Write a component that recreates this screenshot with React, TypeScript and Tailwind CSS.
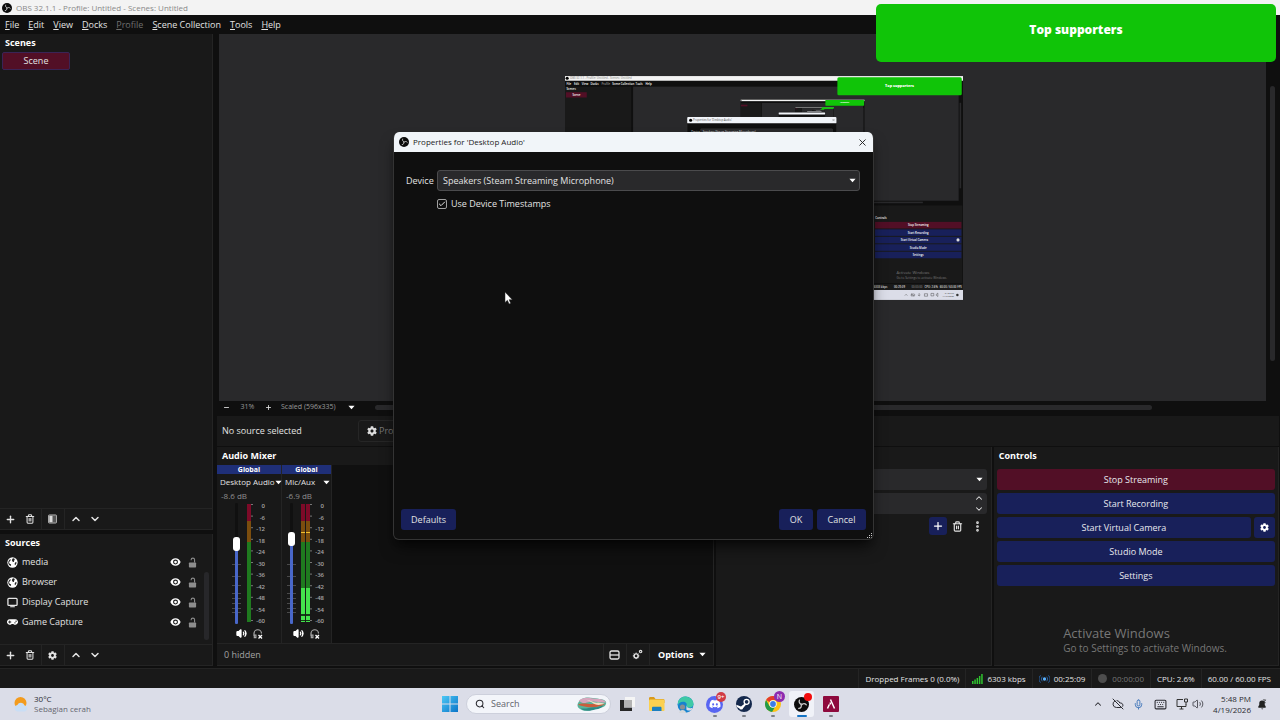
import React from 'react';
import { Plus, Minus, Trash2, ChevronUp, ChevronDown, X, Search, Mic, Keyboard, EllipsisVertical, CloudOff, Volume2, Check } from 'lucide-react';
import { FaGamepad, FaDiscord, FaCog } from 'react-icons/fa';

interface Source {
  name: string;
  kind: 'browser' | 'display' | 'game';
}

interface Channel {
  name: string;
  db: string;
  level: number;
  stereo: boolean;
  width: string;
}

const menus = ['File', 'Edit', 'View', 'Docks', 'Profile', 'Scene Collection', 'Tools', 'Help'];

const sources: Source[] = [
  { name: 'media', kind: 'browser' },
  { name: 'Browser', kind: 'browser' },
  { name: 'Display Capture', kind: 'display' },
  { name: 'Game Capture', kind: 'game' },
];

const channels: Channel[] = [
  { name: 'Desktop Audio', db: '-8.6 dB', level: 68, stereo: false, width: 'w-[65px]' },
  { name: 'Mic/Aux', db: '-6.9 dB', level: 73, stereo: true, width: 'w-[50px]' },
];

const scale = [0, -6, -12, -18, -24, -30, -36, -42, -48, -54, -60];

const Caret = ({ className = '' }: { className?: string }) => (
  <svg viewBox="0 0 8 5" className={`w-[7px] h-[5px] shrink-0 ${className}`} aria-hidden="true">
    <path d="M0.5 0.5h7L4 4.5z" fill="#fff" />
  </svg>
);

const ObsLogo = ({ className = '' }: { className?: string }) => (
  <svg viewBox="0 0 20 20" className={`shrink-0 ${className}`} aria-hidden="true">
    <circle cx="10" cy="10" r="10" fill="#0c0c0c" />
    <g fill="none" stroke="#c9c9c9" strokeWidth="1.7" strokeLinecap="round">
      <path d="M10.500 9.500C7.500 9.300 6.200 6.800 7.200 4.200" />
      <path d="M10.500 9.500C7.500 9.300 6.200 6.800 7.200 4.200" transform="rotate(120 10 10)" />
      <path d="M10.500 9.500C7.500 9.300 6.200 6.800 7.200 4.200" transform="rotate(240 10 10)" />
    </g>
  </svg>
);

const GlobeIcon = () => (
  <svg viewBox="0 0 12 12" className="w-[11px] h-[11px]">
    <circle cx="6" cy="6" r="5.6" fill="#fff" />
    <path d="M6.4 1.4 8 1.7l.5 1.6-1 .9.3 1-1.2.3-.8-.9-.5-1.3zM3.6 2.4l.7 1-1.2 1-.9 2 1 1.2 1.2.4v1.8C2.500 9.300 1.400 7.900 1.400 6c0-1.500.9-2.900 2.200-3.600zM9.400 5.400l1 .2c0 1.500-.7 2.700-1.700 3.500l-.4-1.700z" fill="#222" />
  </svg>
);

const SourceIcon = ({ kind }: { kind: Source['kind'] }) => {
  if (kind === 'browser') return <GlobeIcon />;
  if (kind === 'game') return <FaGamepad className="w-[11px] h-[10px] text-white" />;
  return (
    <svg viewBox="0 0 12 12" className="w-[11px] h-[11px]" fill="none" stroke="#e6e6e6">
      <rect x="1" y="1.500" width="10" height="7.600" rx="1" strokeWidth="1.400" />
      <path d="M3.500 10.600h5" strokeWidth="1.200" />
    </svg>
  );
};

const EyeIcon = () => (
  <svg viewBox="0 0 12 10" className="w-[11px] h-[10px]">
    <path d="M6 .8c2.600 0 4.700 1.700 5.600 4.200C10.700 7.500 8.600 9.200 6 9.200S1.300 7.500.4 5C1.300 2.500 3.400.8 6 .8z" fill="#fff" />
    <circle cx="6" cy="5" r="2.700" fill="#191919" />
    <circle cx="6" cy="5" r="1.500" fill="#fff" />
  </svg>
);

const UnlockIcon = () => (
  <svg viewBox="0 0 10 12" className="w-[9px] h-[11px]">
    <rect x="1" y="6" width="8" height="5.600" rx=".8" fill="#8c8c8c" />
    <path d="M7.300 6V3a1.900 1.900 0 0 0-3.800 0v.6" fill="none" stroke="#8c8c8c" strokeWidth="1.200" />
  </svg>
);

const GearsIcon = () => (
  <svg viewBox="0 0 12 12" className="w-[11px] h-[11px]" fill="none" stroke="#e2e2e2">
    <circle cx="4.500" cy="7.500" r="2.200" strokeWidth="1.600" />
    <path d="M4.500 3.900v7.200M.9 7.500h7.200M2 5l5 5M7 5l-5 5" strokeWidth="1" strokeDasharray="1.300 4.600" />
    <circle cx="9.400" cy="2.800" r="1.300" strokeWidth="1.300" />
  </svg>
);

const LayoutIcon = () => (
  <svg viewBox="0 0 11 10" className="w-[11px] h-[10px]" fill="none" stroke="#e2e2e2" strokeWidth="1.300">
    <rect x="1" y="1" width="9" height="8" rx="1.500" />
    <path d="M1 5h9" />
  </svg>
);

const ToolButton = ({ label, children }: { label: string; children: React.ReactNode }) => (
  <button aria-label={label} className="w-[19px] h-[17px] flex items-center justify-center text-[#e2e2e2] rounded-sm">
    {children}
  </button>
);

const Divider = () => <span className="w-px h-full bg-[#242424] ml-[2px] mr-px" />;

const DockTitle = ({ children }: { children: React.ReactNode }) => (
  <h2 className="h-[18px] pl-[5px] flex items-center font-bold text-white shrink-0">{children}</h2>
);

const DockToolbar = ({ filters = false }: { filters?: boolean }) => (
  <div className="h-[21px] px-[1px] flex items-center border-t border-[#242424] shrink-0">
    <ToolButton label="Add"><Plus size={11} strokeWidth={3} /></ToolButton>
    <ToolButton label="Remove"><Trash2 size={10} strokeWidth={2.5} /></ToolButton>
    <Divider />
    <ToolButton label={filters ? 'Filters' : 'Source properties'}>
      {filters ? (
        <svg viewBox="0 0 10 10" className="w-[9px] h-[10px]">
          <rect x=".5" y=".5" width="9" height="9" rx="1" fill="#555" stroke="#bbb" />
          <rect x="1.500" y="1.500" width="3.500" height="7" fill="#ddd" />
        </svg>
      ) : (
        <FaCog size={9} />
      )}
    </ToolButton>
    <Divider />
    <ToolButton label="Move up"><ChevronUp size={12} strokeWidth={3} /></ToolButton>
    <ToolButton label="Move down"><ChevronDown size={12} strokeWidth={3} /></ToolButton>
  </div>
);

// The captured desktop shows this same window again, so the drawing nests itself.
const CapturedDesktop = ({ depth }: { depth: number }) => (
  <>
    <rect width="1280" height="720" fill="#0f0f0f" />
    <rect width="1280" height="15" fill="#f3f3f3" />
    <circle cx="7" cy="7" r="5" fill="#000" />
    <rect y="34" width="213" height="632" fill="#191919" />
    <rect x="219" y="34" width="1047" height="367" fill="#29292b" />
    <rect x="1269" y="86" width="5" height="275" fill="#29292b" />
    <rect x="500" y="404" width="651" height="5" fill="#29292b" />
    <rect x="217" y="416" width="1061" height="250" fill="#191919" />
    <rect y="668" width="1280" height="20" fill="#191919" />
    <rect y="688" width="1280" height="32" fill="#dbdde8" />
    <rect x="3" y="52" width="67" height="17" fill="#520f26" />
    {depth === 1 && (
      <g fill="#fff" fontSize="9" fontWeight="600">
        <text x="16" y="11" fill="#999">OBS 32.1.1 - Profile: Untitled - Scenes: Untitled</text>
        <text x="5" y="28">File</text>
        <text x="29" y="28">Edit</text>
        <text x="54" y="28">View</text>
        <text x="82" y="28">Docks</text>
        <text x="117" y="28" fill="#999">Profile</text>
        <text x="152" y="28">Scene Collection</text>
        <text x="227" y="28">Tools</text>
        <text x="259" y="28">Help</text>
        <text x="5" y="45">Scenes</text>
        <text x="24" y="64">Scene</text>
        <text x="998" y="459">Controls</text>
      </g>
    )}
    {['Stop Streaming', 'Start Recording', 'Start Virtual Camera', 'Studio Mode', 'Settings'].map((label, i) => (
      <g key={label}>
        <rect x="997" y={469 + i * 24} width="278" height="21" fill={i === 0 ? '#520f26' : '#18205a'} />
        {depth === 1 && (
          <text x={i === 2 ? 1124 : 1136} y={483 + i * 24} fontSize="9" fontWeight="600" fill="#fff" textAnchor="middle">{label}</text>
        )}
      </g>
    ))}
    {depth === 1 && (
      <g>
        <circle cx="1264" cy="527" r="5" fill="#ddd" />
        <text x="1066" y="638" fontSize="13" fill="#777">Activate Windows</text>
        <text x="1066" y="652" fontSize="10" fill="#777">Go to Settings to activate Windows.</text>
        <g fill="#ddd" fontSize="9" fontWeight="600">
          <text x="993" y="682">6303 kbps</text>
          <text x="1058" y="682">00:25:09</text>
          <text x="1114" y="682" fill="#777">00:00:00</text>
          <text x="1156" y="682">CPU: 2.6%</text>
          <text x="1205" y="682">60.00 / 60.00 FPS</text>
        </g>
        <g fill="none" stroke="#444" strokeWidth="1.500">
          <path d="M1093 706l4-4 4 4M1113 700l10 8M1113 707h9a3 3 0 0 0 0-6h-8zM1139 698v8M1135 704q4 6 8 0M1156 700h10v8h-10zM1177 699h9v8h-9zM1194 702l5-4v11l-5-4z" />
        </g>
        <text x="1251" y="702" fontSize="8" fill="#333" textAnchor="end">5:48 PM</text>
        <text x="1251" y="712" fontSize="8" fill="#333" textAnchor="end">4/19/2026</text>
        <circle cx="1262" cy="704" r="4" fill="#333" />
      </g>
    )}
    {depth < 4 && (
      <g transform="translate(565 76) scale(0.311)">
        <CapturedDesktop depth={depth + 1} />
      </g>
    )}
    <rect x="393" y="132" width="480" height="407" rx="4" fill="#0f0f0f" stroke="#333" />
    <rect x="393" y="132" width="480" height="20" rx="3" fill="#f1f4f9" />
    {depth === 1 && (
      <g>
        <circle cx="404" cy="142" r="5" fill="#000" />
        <text x="412" y="145" fontSize="9" fill="#555">Properties for 'Desktop Audio'</text>
        <path d="M860 138l7 7M867 138l-7 7" stroke="#333" />
        <text x="406" y="184" fontSize="9" fill="#ddd">Device</text>
        <rect x="437" y="170" width="423" height="21" fill="#29292b" stroke="#555" />
        <text x="443" y="184" fontSize="9" fill="#ddd">Speakers (Steam Streaming Microphone)</text>
      </g>
    )}
    <rect x="876" y="4" width="400" height="58" rx="5" fill="#10c408" />
    {depth < 3 && <text x="1076" y="34" fontSize="12" fontWeight="800" fill="#fff" textAnchor="middle">Top supporters</text>}
  </>
);

const Fader = ({ channel }: { channel: Channel }) => {
  const top = 7 + ((100 - channel.level) / 100) * 107;
  return (
    <div className="relative w-[9px] h-[121px]">
      <svg viewBox="0 0 9 121" className="w-[9px] h-[121px]" aria-hidden="true">
        <rect x="3" y="0" width="3" height="121" rx="1" fill="#101010" />
        {[61, 73, 82, 90, 95, 100, 105, 109].map(y => (
          <rect key={y} x="0" y={y} width="9" height="1" fill="#4a4a4a" />
        ))}
        <rect x="3" y={top} width="3" height={121 - top} rx="1" fill="#4967c9" />
      </svg>
      <input
        type="range"
        aria-label={`${channel.name} volume`}
        defaultValue={channel.level}
        className="absolute inset-0 w-[9px] h-[121px] m-0 appearance-none bg-transparent [writing-mode:vertical-lr] [direction:rtl] [&::-webkit-slider-thumb]:appearance-none [&::-webkit-slider-thumb]:w-[7px] [&::-webkit-slider-thumb]:h-[14px] [&::-webkit-slider-thumb]:rounded-[3px] [&::-webkit-slider-thumb]:bg-white"
      />
    </div>
  );
};

const Meter = ({ stereo }: { stereo: boolean }) => {
  const bars = stereo ? [0, 5] : [0];
  const end = stereo ? 9 : 4;
  return (
    <svg viewBox={`0 0 ${end + 15} 121`} className={stereo ? 'w-[24px] h-[121px]' : 'w-[19px] h-[121px]'}>
      {bars.map(x => (
        <g key={x}>
          <rect x={x} y="1" width="4" height="17" fill="#7d0a28" />
          <rect x={x} y="18" width="4" height="21" fill="#7b4d0e" />
          <rect x={x} y="39" width="4" height="80" fill="#1f7a1f" />
          {stereo && (
            <>
              <rect x={x} y="29" width="4" height="1" fill="#f0c030" />
              <rect x={x} y="85" width="4" height="34" fill="#44e24c" />
              <rect x={x} y="111" width="4" height="2" fill="#123d14" />
              <rect x={x} y="117" width="4" height="1" fill="#123d14" />
            </>
          )}
        </g>
      ))}
      {scale.map((db, i) => (
        <g key={db}>
          <rect x={end} y={1 + i * 11.6} width="2" height="1" fill="#777" />
          <text x={end + 14} y={5 + i * 11.5} fontSize="6" fontWeight="600" fill="#a5a5a5" textAnchor="end">{db}</text>
        </g>
      ))}
    </svg>
  );
};

const MixerStrip = ({ channel }: { channel: Channel }) => (
  <div className={`${channel.width} flex flex-col bg-[#181818] border-r border-[#242424]`}>
    <div className="h-[9px] bg-[#1f2f78] text-white text-[7px] font-bold leading-[9px] text-center">Global</div>
    <button className="mt-[2px] h-3 pl-[3px] pr-px flex items-center justify-between text-[8px] text-[#e2e2e2] whitespace-nowrap">
      {channel.name} <Caret />
    </button>
    <div className="h-[15px] pl-1 flex items-center text-[8px] text-[#8f8f8f]">{channel.db}</div>
    <div className={`h-[121px] flex ${channel.stereo ? 'pl-[5px] gap-[5px]' : 'pl-[15px] gap-[6px]'}`}>
      <Fader channel={channel} />
      <Meter stereo={channel.stereo} />
    </div>
    <div className="flex-1 flex items-center justify-center gap-[6px]">
      <button aria-label="Mute"><Volume2 size={11} strokeWidth={2.5} fill="#fff" color="#fff" /></button>
      <button aria-label="Monitor">
        <svg viewBox="0 0 10 10" className="w-[10px] h-[10px]" fill="none" stroke="#aaa">
          <path d="M1 7V4.500a3.700 3.700 0 0 1 7.500 0M1.300 6v2.700h1.600V6z" strokeWidth="1.200" />
          <path d="M5.500 6l3.500 3.500M9 6 5.500 9.500" stroke="#fff" strokeWidth="1.300" />
        </svg>
      </button>
    </div>
  </div>
);

const ControlButton = ({ label, red = false }: { label: string; red?: boolean }) => (
  <button className={`h-[21px] flex-1 rounded-[3px] text-[#e8e8ee] ${red ? 'bg-[#520f26]' : 'bg-[#18205a]'}`}>{label}</button>
);

const PropertiesDialog = () => (
  <div role="dialog" aria-label="Properties for 'Desktop Audio'" className="absolute left-[393px] top-[132px] w-[481px] h-[408px] flex flex-col bg-[#0f0f0f] border border-t-0 border-[#343434] rounded-md overflow-hidden shadow-lg shadow-black/60">
    <div className="h-5 px-[5px] flex items-center gap-1 bg-[#f1f5f9] text-[#1c1c1c] text-[8px]">
      <ObsLogo className="w-[10px] h-[10px]" />
      <span className="flex-1">Properties for 'Desktop Audio'</span>
      <button aria-label="Close"><X size={11} strokeWidth={2} /></button>
    </div>
    <div className="flex-1 pt-[18px] pl-3 pr-[13px]">
      <div className="flex items-center gap-1">
        <label htmlFor="device" className="w-[27px]">Device</label>
        <div className="relative flex-1">
          <select id="device" className="w-full h-[21px] pl-[5px] appearance-none rounded-[3px] border border-[#4b4b4d] bg-[#29292b] text-[#e2e2e2]">
            <option>Speakers (Steam Streaming Microphone)</option>
          </select>
          <Caret className="absolute right-1 top-2 pointer-events-none" />
        </div>
      </div>
      <label className="mt-[7px] ml-[31px] h-3 flex items-center gap-1">
        <span className="relative w-[10px] h-[10px] flex">
          <input type="checkbox" defaultChecked className="w-[10px] h-[10px] appearance-none rounded-[2px] border border-[#a0a0a0]" />
          <Check size={8} strokeWidth={3} className="absolute left-[1px] top-[1px] pointer-events-none" />
        </span>
        Use Device Timestamps
      </label>
    </div>
    <div className="pb-[9px] pl-[7px] pr-[7px] flex gap-1">
      <button className="w-[55px] h-[21px] mr-auto rounded-[3px] bg-[#18205a]">Defaults</button>
      <button className="w-[34px] h-[21px] rounded-[3px] bg-[#18205a]">OK</button>
      <button className="w-[49px] h-[21px] rounded-[3px] bg-[#18205a]">Cancel</button>
    </div>
    <svg viewBox="0 0 6 6" className="absolute right-px bottom-[1px] w-[6px] h-[6px]" fill="#ccc" aria-hidden="true">
      <path d="M5 1h1v1h-1zM3 3h1v1h-1zM5 3h1v1h-1zM1 5h1v1h-1zM3 5h1v1h-1zM5 5h1v1h-1z" />
    </svg>
  </div>
);

const TaskIcon = ({ label, running = false, active = false, children }: { label: string; running?: boolean; active?: boolean; children: React.ReactNode }) => (
  <button aria-label={label} className={`relative w-[25px] h-[26px] flex items-center justify-center rounded-[3px] ${active ? 'bg-[#f0f2f8]' : ''}`}>
    {children}
    {running && <span className={`absolute bottom-0 h-[2px] rounded-full ${active ? 'w-[10px] bg-[#1473c4]' : 'w-1 bg-[#7d8088]'}`} />}
  </button>
);

const Taskbar = () => (
  <footer className="h-8 grid grid-cols-[1fr_auto_1fr] items-center bg-[#dbdde8] text-[#2a2a30] text-[8px]">
    <div className="pl-[13px] flex items-center gap-[5px]">
      <svg viewBox="0 0 16 16" className="w-4 h-4">
        <circle cx="7.500" cy="7" r="6" fill="#f39b1d" />
        <path d="M4.500 15.500a3.300 3.300 0 0 1-.2-6.500 4 4 0 0 1 7.300.4 3.100 3.100 0 0 1 .4 6.100z" fill="#c9def5" />
      </svg>
      <div className="leading-[10px]">
        <div>30°C</div>
        <div className="text-[#65666e]">Sebagian cerah</div>
      </div>
    </div>
    <div className="flex items-center gap-1">
      <TaskIcon label="Start">
        <svg viewBox="0 0 16 16" className="w-4 h-4">
          <defs>
            <linearGradient id="win" x1="0" y1="0" x2="1" y2="1">
              <stop offset="0" stopColor="#4cc8f5" />
              <stop offset="1" stopColor="#0a74c8" />
            </linearGradient>
          </defs>
          <path d="M0 0h7.500v7.500H0zM8.500 0H16v7.500H8.500zM0 8.500h7.500V16H0zM8.500 8.500H16V16H8.500z" fill="url(#win)" />
        </svg>
      </TaskIcon>
      <div className="w-[145px] h-5 pl-2 pr-[1px] flex items-center gap-[6px] rounded-full bg-[#f3f5fa] border border-[#cdd0dc]">
        <Search size={10} strokeWidth={2.5} className="shrink-0" />
        <input type="text" aria-label="Search" placeholder="Search" className="flex-1 min-w-0 text-[9px] bg-transparent placeholder:text-[#62646c]" />
        <svg viewBox="0 0 34 18" className="w-[34px] h-[17px] shrink-0">
          <path d="M2 8C5 1 12 1 18 2s14 1 14 5-3 5-8 6-12 4-17 2-6-4-5-7z" fill="#58b39a" />
          <path d="M3 5c5-5 12-3 18-2 5 0 9 1 11 4-8 0-12-2-17-1S8 9 3 5z" fill="#d6a5bd" />
          <path d="M2 9c7-3 12 1 20-1l9 1c-6 2-9 3-14 3S6 11 2 9z" fill="#c95d3c" />
          <path d="M5 13c7 1 10-2 17-1l7-2c-3 4-8 4-12 5s-9 1-12-2z" fill="#2c8a85" />
          <path d="M11 4c5 0 7 4 13 3l6 1c-6 3-10 1-13-1s-4-2-6-3z" fill="#f3e0c6" />
        </svg>
      </div>
      <TaskIcon label="Task view">
        <svg viewBox="0 0 16 16" className="w-4 h-4">
          <path d="M5 1h10v10H5z" fill="#f5f5f5" />
          <path d="M0 4h4v7.500h8V15H0z" fill="#262626" />
          <path d="M4 4h8v7.500H4z" fill="#b3b3b3" />
        </svg>
      </TaskIcon>
      <TaskIcon label="File Explorer">
        <svg viewBox="0 0 17 16" className="w-[17px] h-4">
          <path d="M1 2.500C1 1.500 1.500 1 2.500 1H6l1.500 2H15c1 0 1.500.5 1.500 1.500V7H1z" fill="#d99a1b" />
          <rect x="1" y="3.500" width="15.500" height="11.500" rx="1" fill="#fbd050" />
          <path d="M4 15v-3c0-.8.4-1.200 1.200-1.200h7.100c.8 0 1.200.4 1.200 1.200v3z" fill="#1b7fc0" />
        </svg>
      </TaskIcon>
      <TaskIcon label="Edge">
        <svg viewBox="0 0 17 17" className="w-[17px] h-[17px]">
          <circle cx="8.500" cy="8.500" r="8" fill="#1683cf" />
          <path d="M1 6C3 1 7 0 10 .8c4 .8 6.500 4 6.500 7 0 2.500-2 4-4.500 4-2 0-3-1-2.500-2 .8-2-.5-4-3.500-4-2.500 0-4.500 1.200-5 3.500z" fill="#3fc9a6" />
          <path d="M9.500 9.500c0 2 3 3.500 6.300 2.300-1 2.300-3.500 4.500-6.500 4.700z" fill="#dbdde8" />
          <path d="M7 9c0 4 3.500 6.500 7 5.300-2 2-5 2.700-7.500 2z" fill="#1683cf" />
          <circle cx="5.500" cy="11" r="2.600" fill="#8a8f94" />
          <path d="M2 17c0-4 7-4 7 0z" fill="#d5d8da" />
        </svg>
      </TaskIcon>
      <TaskIcon label="Discord" running>
        <span className="w-[17px] h-[17px] rounded-full bg-[#5865f2] flex items-center justify-center text-white"><FaDiscord size={12} /></span>
        <span className="absolute top-[1px] right-[1px] w-[10px] h-[10px] rounded-full bg-[#d13c46] text-white text-[6px] leading-[10px] font-semibold">9+</span>
      </TaskIcon>
      <TaskIcon label="Steam" running>
        <svg viewBox="0 0 16 16" className="w-4 h-4">
          <circle cx="8" cy="8" r="8" fill="#14284c" />
          <circle cx="10.600" cy="5.800" r="2.500" fill="none" stroke="#fff" strokeWidth="1.300" />
          <path d="M.3 8.800 5 10.600l3.800-3.200 1.400 1.200-3 3.300a2.100 2.100 0 0 1-4 .3L.8 11z" fill="#fff" />
        </svg>
      </TaskIcon>
      <TaskIcon label="Chrome" running>
        <svg viewBox="0 0 16 16" className="w-4 h-4">
          <circle cx="8" cy="8" r="8" fill="#fbc116" />
          <path d="M1.100 4A8 8 0 0 1 14.900 4H8a4 4 0 0 0-3.500 2z" fill="#e33b2e" />
          <path d="M1.100 4a8 8 0 0 0 6 12l3.400-6a4 4 0 0 1-6 0z" fill="#229a49" />
          <circle cx="8" cy="8" r="3.700" fill="#fff" />
          <circle cx="8" cy="8" r="2.900" fill="#3b7de8" />
        </svg>
        <span className="absolute top-0 right-0 w-[11px] h-[11px] rounded-full bg-[#8e2bb0] text-white text-[7px] leading-[11px]">N</span>
      </TaskIcon>
      <TaskIcon label="OBS Studio" running active>
        <ObsLogo className="w-[15px] h-[15px]" />
        <span className="absolute top-[2px] right-[2px] w-2 h-2 rounded-full bg-[#f20d0d]" />
      </TaskIcon>
      <TaskIcon label="Launcher" running>
        <svg viewBox="0 0 16 16" className="w-4 h-4">
          <rect width="16" height="16" rx="1" fill="#8e0a3d" />
          <path d="M7.500 3.500 11.500 12.500M7.300 6.500v2M6.300 8.500l-1.800 4" fill="none" stroke="#fff" strokeWidth="1.500" />
        </svg>
      </TaskIcon>
    </div>
    <div className="pr-[13px] flex items-center justify-end">
      <ChevronUp size={10} strokeWidth={2.5} className="mr-[9px]" />
      <CloudOff size={12} className="mr-[9px]" />
      <Mic size={11} className="mr-[10px] text-[#3a72b8]" />
      <Keyboard size={13} className="mr-[9px]" />
      <svg viewBox="0 0 12 12" className="w-3 h-3 mr-1" fill="none" stroke="#333">
        <path d="M7 1.500H1v7h9V6M3.500 11h4M5.500 8.500V11" />
        <path d="M8.500 1h3v3h-3zM10 4v2.500" />
      </svg>
      <Volume2 size={12} strokeWidth={1.5} className="mr-[9px]" />
      <div className="text-right leading-[11px] mr-[6px]">
        <div>5:48 PM</div>
        <div>4/19/2026</div>
      </div>
      <svg viewBox="0 0 10 12" className="w-[10px] h-[11px]">
        <path d="M1 9.500V8l1-1.500V4.500a3 3 0 0 1 6 0v2L9 8v1.500zM4 10.300h2.500L5.200 11.500z" fill="#222" />
        <path d="M6 1h3L6.500 4H9" fill="none" stroke="#222" strokeWidth=".8" />
      </svg>
    </div>
  </footer>
);

const App: React.FC = () => {
  return (
    <div className="relative h-screen min-h-[640px] flex flex-col overflow-hidden bg-[#0f0f0f] text-[#e2e2e2] text-[9px] leading-3 font-['Open_Sans','Noto_Sans',sans-serif]">
      <header>
        <div className="h-[15px] pl-[2px] flex items-center gap-1 bg-[#f3f3f3] text-[#8a8a8a] text-[8px]">
          <ObsLogo className="w-[10px] h-[10px]" />
          <span>OBS 32.1.1 - Profile: Untitled - Scenes: Untitled</span>
        </div>
        <nav className="h-[19px] pl-[5px] flex items-center gap-[9px]">
          {menus.map(menu => (
            <button key={menu} className={menu === 'Profile' ? 'text-[#6e6e6e]' : ''}>
              <span className="underline underline-offset-1">{menu[0]}</span>{menu.slice(1)}
            </button>
          ))}
        </nav>
      </header>

      <main className="flex-1 min-h-0 flex gap-1 pr-px pb-[2px]">
        <aside className="w-[213px] flex flex-col gap-1">
          <section className="flex-1 min-h-0 flex flex-col bg-[#191919] border-r border-b border-[#242424]">
            <DockTitle>Scenes</DockTitle>
            <div className="flex-1 pl-[2px]">
              <button className="w-[68px] h-[18px] rounded-[2px] bg-[#520f26] border border-[#3a2456]">Scene</button>
            </div>
            <DockToolbar filters />
          </section>

          <section className="h-[132px] flex flex-col bg-[#191919] border-r border-b border-[#242424]">
            <DockTitle>Sources</DockTitle>
            <div className="flex-1 flex">
              <ul className="flex-1">
                {sources.map(source => (
                  <li key={source.name} className="h-5 pl-[7px] pr-[7px] flex items-center">
                    <SourceIcon kind={source.kind} />
                    <span className="flex-1 pl-1">{source.name}</span>
                    <button aria-label={`Hide ${source.name}`} className="mr-[7px]"><EyeIcon /></button>
                    <button aria-label={`Lock ${source.name}`}><UnlockIcon /></button>
                  </li>
                ))}
              </ul>
              <div className="w-[5px] mt-5 mb-1 mr-[3px] rounded-full bg-[#27272a]" />
            </div>
            <DockToolbar />
          </section>
        </aside>

        <div className="flex-1 min-w-0 flex flex-col">
          <div className="flex-1 min-h-0 flex pl-[2px]">
            <div className="relative flex-1 overflow-hidden bg-[#29292b]">
              <svg viewBox="0 0 1280 720" className="absolute left-[346px] top-[42px] w-[398px] h-[224px]">
                <CapturedDesktop depth={1} />
              </svg>
            </div>
            <div className="w-[13px] px-1 pt-[52px] pb-10">
              <div className="w-[5px] h-full rounded-full bg-[#29292b]" />
            </div>
          </div>
          <div className="h-3 pl-[6px] flex items-center text-[7px] text-[#9a9a9a]">
            <button aria-label="Zoom out"><Minus size={7} strokeWidth={3} color="#ddd" /></button>
            <span className="w-[35px] text-center">31%</span>
            <button aria-label="Zoom in"><Plus size={7} strokeWidth={3} color="#ddd" /></button>
            <button className="ml-[9px] w-[74px] flex items-center justify-between">Scaled (596x335) <Caret /></button>
            <div className="flex-1 h-[5px] ml-5 mr-[127px] rounded-full bg-[#29292b]" />
          </div>
          <div className="h-[30px] mt-[3px] mb-px pl-[5px] flex items-center bg-[#191919]">
            <span className="w-[136px]">No source selected</span>
            <button className="h-[22px] px-2 flex items-center gap-[2px] rounded-[3px] border border-[#262626] text-[#777]">
              <FaCog size={10} color="#ddd" /> Properties
            </button>
          </div>

          <div className="h-[219px] grid grid-cols-[497fr_275fr_285fr] gap-[2px]">
            <section className="flex flex-col bg-[#191919] border-r border-b border-[#242424]">
              <DockTitle>Audio Mixer</DockTitle>
              <div className="flex-1 flex bg-[#101010]">
                {channels.map(channel => <MixerStrip key={channel.name} channel={channel} />)}
              </div>
              <div className="h-[22px] pl-[7px] flex items-center border-t border-[#242424]">
                <button className="mr-auto text-[#a3a3a3]">0 hidden</button>
                <Divider />
                <ToolButton label="Layout"><LayoutIcon /></ToolButton>
                <Divider />
                <ToolButton label="Advanced audio"><GearsIcon /></ToolButton>
                <Divider />
                <button className="px-[7px] flex items-center gap-[6px] font-bold text-white">Options <Caret /></button>
              </div>
            </section>

            <section className="px-1 pt-[22px] flex flex-col gap-[3px] bg-[#191919] border-r border-b border-[#242424]">
              <div className="relative">
                <select aria-label="Transition" className="w-full h-[21px] pl-2 appearance-none rounded-[3px] bg-[#29292b]">
                  <option>Fade</option>
                </select>
                <Caret className="absolute right-1 top-2 pointer-events-none" />
              </div>
              <div className="h-[21px] flex rounded-[3px] bg-[#29292b]">
                <input type="text" aria-label="Duration" defaultValue="300 ms" className="flex-1 min-w-0 pl-2 bg-transparent" />
                <div className="w-4 flex flex-col items-center justify-between">
                  <button aria-label="Increase"><ChevronUp size={10} strokeWidth={2.5} /></button>
                  <button aria-label="Decrease"><ChevronDown size={10} strokeWidth={2.5} /></button>
                </div>
              </div>
              <div className="flex justify-end gap-[2px]">
                <button aria-label="Add transition" className="w-[18px] h-[18px] flex items-center justify-center rounded-[3px] bg-[#18205a] text-white"><Plus size={12} strokeWidth={2.5} /></button>
                <button aria-label="Remove transition" className="w-[18px] h-[18px] flex items-center justify-center"><Trash2 size={11} strokeWidth={2.5} /></button>
                <button aria-label="More" className="w-[18px] h-[18px] flex items-center justify-center"><EllipsisVertical size={13} strokeWidth={3} /></button>
              </div>
            </section>

            <section className="flex flex-col bg-[#191919] border-r border-b border-[#242424]">
              <DockTitle>Controls</DockTitle>
              <div className="px-[3px] pt-1 flex flex-col gap-[3px]">
                <div className="flex"><ControlButton label="Stop Streaming" red /></div>
                <div className="flex"><ControlButton label="Start Recording" /></div>
                <div className="flex gap-[3px]">
                  <ControlButton label="Start Virtual Camera" />
                  <button aria-label="Virtual camera settings" className="w-[21px] h-[21px] flex items-center justify-center rounded-[3px] bg-[#18205a] text-white"><FaCog size={9} /></button>
                </div>
                <div className="flex"><ControlButton label="Studio Mode" /></div>
                <div className="flex"><ControlButton label="Settings" /></div>
              </div>
            </section>
          </div>
        </div>
      </main>

      <div className="h-5 pr-[3px] flex items-center justify-end bg-[#191919] border-t border-[#242424] text-[8px] whitespace-nowrap">
        <span className="h-full px-[6px] flex items-center border-l border-[#242424]">Dropped Frames 0 (0.0%)</span>
        <span className="h-full px-[6px] flex items-center gap-1 border-l border-[#242424]">
          <svg viewBox="0 0 11 10" className="w-[11px] h-[10px]" fill="#2fc42f">
            <path d="M0 7h1.500v3H0zM2.300 5.500h1.500V10H2.300zM4.600 4h1.500v6H4.600zM6.900 2h1.500v8H6.900zM9.200 0h1.500v10H9.200z" />
          </svg>
          6303 kbps
        </span>
        <span className="h-full px-[6px] flex items-center gap-1 border-l border-[#242424]">
          <svg viewBox="0 0 12 10" className="w-[11px] h-[10px]" fill="none" stroke="#2764a8">
            <circle cx="6" cy="5" r="1.800" fill="#5ab2ff" stroke="none" />
            <path d="M3.500 2.500a4 4 0 0 0 0 5M8.500 2.500a4 4 0 0 1 0 5M1.700 1a6 6 0 0 0 0 8M10.300 1a6 6 0 0 1 0 8" />
          </svg>
          00:25:09
        </span>
        <span className="h-full px-[6px] flex items-center gap-[5px] border-l border-[#242424] text-[#777]">
          <span className="w-[9px] h-[9px] rounded-full bg-[#4d4d4d]" />
          00:00:00
        </span>
        <span className="h-full px-[6px] flex items-center border-l border-[#242424]">CPU: 2.6%</span>
        <span className="h-full px-[6px] flex items-center border-l border-[#242424]">60.00 / 60.00 FPS</span>
      </div>

      <Taskbar />

      <PropertiesDialog />

      <div className="absolute right-[4px] top-[4px] w-[400px] h-[58px] pt-4 rounded-[5px] bg-[#10c408] text-white text-xs leading-5 font-extrabold text-center">
        Top supporters
      </div>

      <div className="absolute right-[53px] bottom-[65px] text-[#777] pointer-events-none">
        <div className="text-[13px] leading-4">Activate Windows</div>
        <div className="text-[10px] leading-[14px]">Go to Settings to activate Windows.</div>
      </div>

      <svg viewBox="0 0 9 14" className="absolute left-[504px] top-[291px] w-[9px] h-[14px] pointer-events-none" aria-hidden="true">
        <path d="M1 1v10.500l2.400-2.200 1.700 3.700 1.600-.7L5.100 8.700h3.200z" fill="#fff" stroke="#222" strokeWidth=".5" />
      </svg>
    </div>
  );
};

export default App;
